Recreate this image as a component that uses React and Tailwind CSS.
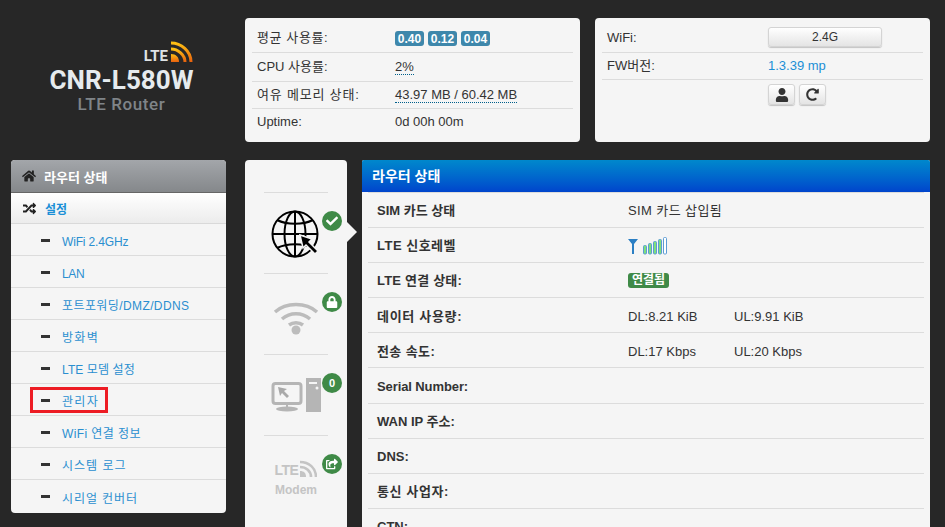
import { FaHome, FaRandom, FaUser, FaRedoAlt, FaLock, FaCheck, FaShareSquare } from 'react-icons/fa'

const menuItems = [
  { name: 'WiFi 2.4GHz', track: 'tracking-[-0.15px]' },
  { name: 'LAN', track: 'tracking-[-0.4px]' },
  { name: '포트포워딩/DMZ/DDNS', track: 'tracking-[0.4px]' },
  { name: '방화벽', track: 'tracking-[1.3px]' },
  { name: 'LTE 모뎀 설정', track: 'tracking-[0.1px]' },
  { name: '관리자', track: 'tracking-[1.3px]', marked: true },
  { name: 'WiFi 연결 정보', track: 'tracking-[0.4px]' },
  { name: '시스템 로그', track: 'tracking-[1px]' },
  { name: '시리얼 컨버터', track: 'tracking-[0.9px]' }
]

const statusRows = [
  { label: 'SIM 카드 상태', value: 'SIM 카드 삽입됨', valueTrack: 'tracking-[0.4px]' },
  { label: 'LTE 신호레벨', track: 'tracking-[0.5px]', signal: true },
  { label: 'LTE 연결 상태:', track: 'tracking-[0.2px]', connected: true },
  { label: '데이터 사용량:', track: 'tracking-[0.7px]', value: 'DL:8.21 KiB', value2: 'UL:9.91 KiB' },
  { label: '전송 속도:', track: 'tracking-[0.4px]', value: 'DL:17 Kbps', value2: 'UL:20 Kbps' },
  { label: 'Serial Number:', track: 'tracking-[-0.1px]' },
  { label: 'WAN IP 주소:' },
  { label: 'DNS:' },
  { label: '통신 사업자:', track: 'tracking-[0.6px]' },
  { label: 'CTN:' }
]

const WavesLogo = () => (
  <svg width="23" height="21" viewBox="0 0 23 21">
    <defs>
      <linearGradient id="lteWave" x1="0" y1="0" x2="0" y2="1">
        <stop offset="0" stopColor="#fdc014" />
        <stop offset="1" stopColor="#e8610e" />
      </linearGradient>
    </defs>
    <g fill="none" stroke="url(#lteWave)" strokeWidth="3">
      <path d="M1 2c10 0 20 8 20 19" />
      <path d="M1 8c7 0 14 6 14 13" />
    </g>
    <path d="M1 13c5 0 8 3 8 8H1z" fill="url(#lteWave)" />
  </svg>
)

const GlobeIcon = () => (
  <svg width="50" height="50" viewBox="0 0 50 50" fill="none" stroke="#000" strokeWidth="2">
    <circle cx="24" cy="24" r="22.5" />
    <ellipse cx="24" cy="24" rx="10.5" ry="22.5" />
    <path d="M24 1.5v45M1.5 24h45" />
    <path d="M6 10c10 5 26 5 36 0M6 38c10-5 26-5 36 0" />
    <path d="M29 25l12 4-3 3 9 9-3 3-9-9-3 3z" fill="#000" stroke="#f5f5f5" strokeWidth="1.5" />
  </svg>
)

const WifiIcon = () => (
  <svg width="46" height="34" viewBox="0 0 46 34" fill="none" stroke="#bcbcbc" strokeWidth="3.5">
    <path d="M2 11C13 1 33 1 44 11" />
    <path d="M9 18c8-7 20-7 28 0" />
    <path d="M16 24c4-3 10-3 14 0" />
    <circle cx="23" cy="29" r="4.5" fill="#bcbcbc" stroke="none" />
  </svg>
)

const PcIcon = () => (
  <svg width="50" height="36" viewBox="0 0 50 36">
    <rect x="2" y="6.5" width="28" height="20" rx="2.5" fill="none" stroke="#b5b5b5" strokeWidth="3" />
    <path d="M7 10l9 2-3 2 5 5-2 2-5-5-2 3z" fill="#a9a9a9" />
    <path d="M15 26h2v4h-2z" fill="#b5b5b5" />
    <ellipse cx="16" cy="32" rx="11" ry="2.6" fill="#b5b5b5" />
    <rect x="35" y="1" width="15" height="34" fill="#b5b5b5" />
    <rect x="38" y="5" width="8" height="2" fill="#f5f5f5" />
    <circle cx="46" cy="11" r="1.5" fill="#f5f5f5" />
  </svg>
)

const ModemIcon = () => (
  <div className="flex flex-col items-center">
    <div className="flex items-end gap-px">
      <span className="text-[14px] leading-[13px] font-bold text-[#c4c4c4] tracking-[-0.5px]">LTE</span>
      <svg width="18" height="17" viewBox="0 0 18 17">
        <g fill="none" stroke="#c4c4c4" strokeWidth="2.6">
          <path d="M1 2c9 0 16 6 16 15" />
          <path d="M1 7c6 0 11 4 11 10" />
        </g>
        <path d="M1 11c4 0 6 2 6 6H1z" fill="#c4c4c4" />
      </svg>
    </div>
    <span className="mt-[6px] text-[12px] leading-[14px] font-bold text-[#c4c4c4]">Modem</span>
  </div>
)

const SignalIcon = () => (
  <svg width="40" height="20" viewBox="0 0 40 20">
    <path d="M0 4h10L6 9v10H4V9z" fill="#2b7fc4" />
    <g stroke="#5b9bd5" strokeWidth="1" fill="#7fe07a">
      <rect x="15.5" y="10.5" width="3" height="8.5" rx="1" />
      <rect x="20.5" y="8.5" width="3" height="10.5" rx="1" />
      <rect x="25.5" y="6.5" width="3" height="12.5" rx="1" />
      <rect x="30.5" y="4.5" width="3" height="14.5" rx="1" />
      <rect x="35.5" y="2.5" width="3" height="16.5" rx="1" fill="#fff" />
    </g>
  </svg>
)

const Step = ({ badge, children, className }) => (
  <div className={`relative h-[81px] border-t border-[#dcdcdc] flex justify-center ${className}`}>
    {children}
    <div className="absolute right-[-14px] top-[18px] w-5 h-5 rounded-full bg-[#3f8a47] text-white text-[11px] font-bold flex items-center justify-center">
      {badge}
    </div>
  </div>
)

const BtnClass = 'flex items-center justify-center rounded-[3px] border border-[#d4d4d4] bg-gradient-to-b from-white to-[#e4e4e4] shadow-[0_1px_1px_rgba(0,0,0,0.2)] text-[#333]'

const App = () => {
  return (
    <div className="h-[527px] overflow-hidden bg-[#272727] font-['Liberation_Sans','Noto_Sans_CJK_KR',sans-serif] text-[13px] text-[#333]">
      {/* Top */}
      <div className="flex h-[160px] pt-[18px]">
        <div className="w-[245px] pr-[2px] flex flex-col items-center">
          <div className="flex items-end self-end mr-[50px] mt-[23px] h-[21px]">
            <span className="font-['Roboto',sans-serif] font-bold text-[15px] leading-[15px] -mb-[2px] text-[#dfe3e5] mr-[2px]">LTE</span>
            <WavesLogo />
          </div>
          <div className="font-['Roboto',sans-serif] font-bold text-[26px] leading-[26px] mt-[5px] text-[#e6ebee]">CNR-L580W</div>
          <div className="font-['Roboto',sans-serif] font-medium text-[17px] leading-[20px] mt-[1px] text-[#7f8488] tracking-[0.6px]">LTE Router</div>
        </div>

        <div className="w-[335px] h-[124px] rounded-[4px] bg-[#f5f5f5] px-[7px] pt-[7px]">
          <div className="flex items-center h-[28px] border-b border-[#dcdcdc] px-[5px]">
            <span className="w-[138px] pb-[2px] tracking-[0.6px]">평균 사용률:</span>
            <div className="flex gap-[4px]">
              {['0.40', '0.12', '0.04'].map((load, i) => (
                <span key={i} className="w-[29px] h-[15px] flex items-center justify-center rounded-[3px] bg-[#3e87ab] text-white text-[12px] font-bold">{load}</span>
              ))}
            </div>
          </div>
          <div className="flex items-center h-[29px] border-b border-[#dcdcdc] px-[5px]">
            <span className="w-[138px] pb-[1px]">CPU 사용률:</span>
            <span className="border-b border-dotted border-[#005f8a] leading-[15px]">2%</span>
          </div>
          <div className="flex items-center h-[27px] border-b border-[#dcdcdc] px-[5px]">
            <span className="w-[138px] tracking-[0.8px]">여유 메모리 상태:</span>
            <span className="border-b border-dotted border-[#005f8a] leading-[15px]">43.97 MB / 60.42 MB</span>
          </div>
          <div className="flex items-center h-[25px] px-[5px]">
            <span className="w-[138px]">Uptime:</span>
            <span>0d 00h 00m</span>
          </div>
        </div>

        <div className="w-[335px] h-[124px] ml-[15px] rounded-[4px] bg-[#f5f5f5] px-[7px] pt-[7px]">
          <div className="flex items-center h-[28px] border-b border-[#dcdcdc] px-[5px] pb-[3px]">
            <span className="w-[161px] pt-[2px]">WiFi:</span>
            <button className={`${BtnClass} w-[114px] h-[20px] text-[12px]`}>2.4G</button>
          </div>
          <div className="flex items-center h-[27px] border-b border-[#dcdcdc] px-[5px]">
            <span className="w-[161px]">FW버전:</span>
            <span className="text-[#1b8fd6]">1.3.39 mp</span>
          </div>
          <div className="flex gap-[4px] pl-[166px] pt-[4px]">
            <button className={`${BtnClass} w-[27px] h-[21px]`}><FaUser size={14} /></button>
            <button className={`${BtnClass} w-[27px] h-[21px]`}><FaRedoAlt size={13} /></button>
          </div>
        </div>
      </div>

      {/* Body */}
      <div className="flex items-start pl-[11px]">
        {/* Sidebar */}
        <div className="w-[215px] h-[353px] rounded-[4px] bg-[#f5f5f5] overflow-hidden">
          <div className="flex items-center h-[33px] bg-gradient-to-b from-[#a3a6aa] to-[#85888b] border-b border-[#666] pl-[11px] text-white font-bold">
            <FaHome size={14} className="text-[#222] mr-[8px] w-[14px]" />
            <span className="pt-[3px]">라우터 상태</span>
          </div>
          <div className="flex items-center h-[31px] bg-gradient-to-b from-white to-[#ececec] border-b border-[#d9d9d9] pl-[12px] text-[#1b8fd6] font-bold text-[12px]">
            <FaRandom size={13} className="text-[#222] mr-[9px] w-[13px]" />
            <span className="pt-[3px]">설정</span>
          </div>
          {menuItems.map((item) => (
            <div key={item.name} className="flex items-center h-[32px] pt-[1px] border-b border-[#dcdcdc] last:border-b-0 pl-[19px] text-[12px] text-[#2a8fd0]">
              <div className={`flex items-center h-[26px] border-[3px] pl-[8px] pr-[6px] ${item.marked ? 'border-[#ed1c24]' : 'border-transparent'}`}>
                <span className="w-[9px] h-[3px] mr-[12px] bg-[#333]" />
                <span className={`pt-[4px] ${item.track}`}>{item.name}</span>
              </div>
            </div>
          ))}
        </div>

        {/* Steps */}
        <div className="relative w-[102px] h-[400px] ml-[19px] rounded-t-[4px] bg-[#f5f5f5] pt-[32px] px-[19px]">
          <Step badge={<FaCheck size={12} />} className="pt-[17px]">
            <GlobeIcon />
          </Step>
          <Step badge={<FaLock size={12} />} className="pt-[27px]">
            <WifiIcon />
          </Step>
          <Step badge="0" className="pt-[22px]">
            <PcIcon />
          </Step>
          <Step badge={<FaShareSquare size={12} />} className="pt-[24px]">
            <ModemIcon />
          </Step>
          <div className="absolute left-[102px] top-[62px] w-0 h-0 border-y-[10px] border-y-transparent border-l-[10px] border-l-[#f5f5f5]" />
        </div>

        {/* Main */}
        <div className="w-[568px] h-[400px] ml-[15px] rounded-t-[2px] bg-[#f5f5f5] overflow-hidden">
          <div className="flex items-center h-[32px] bg-gradient-to-b from-[#0088cc] to-[#0044cc] pl-[10px] text-white font-bold text-[14px]">
            라우터 상태
          </div>
          <div className="mx-[6px] border-t border-[#dcdcdc]">
            {statusRows.map((row) => (
              <div key={row.label} className="flex items-center h-[35.1px] border-b border-[#dcdcdc] px-[9px]">
                <span className={`w-[251px] pt-[2px] font-bold ${row.track || ''}`}>{row.label}</span>
                {row.value && <span className={`w-[106px] pt-[2px] ${row.valueTrack || ''}`}>{row.value}</span>}
                {row.value2 && <span className="pt-[2px]">{row.value2}</span>}
                {row.signal && <SignalIcon />}
                {row.connected && (
                  <span className="flex items-center justify-center w-[41px] h-[15px] rounded-[3px] bg-[#3f8a47] text-white text-[12px] font-bold">연결됨</span>
                )}
              </div>
            ))}
          </div>
        </div>
      </div>
    </div>
  )
}

export default App
